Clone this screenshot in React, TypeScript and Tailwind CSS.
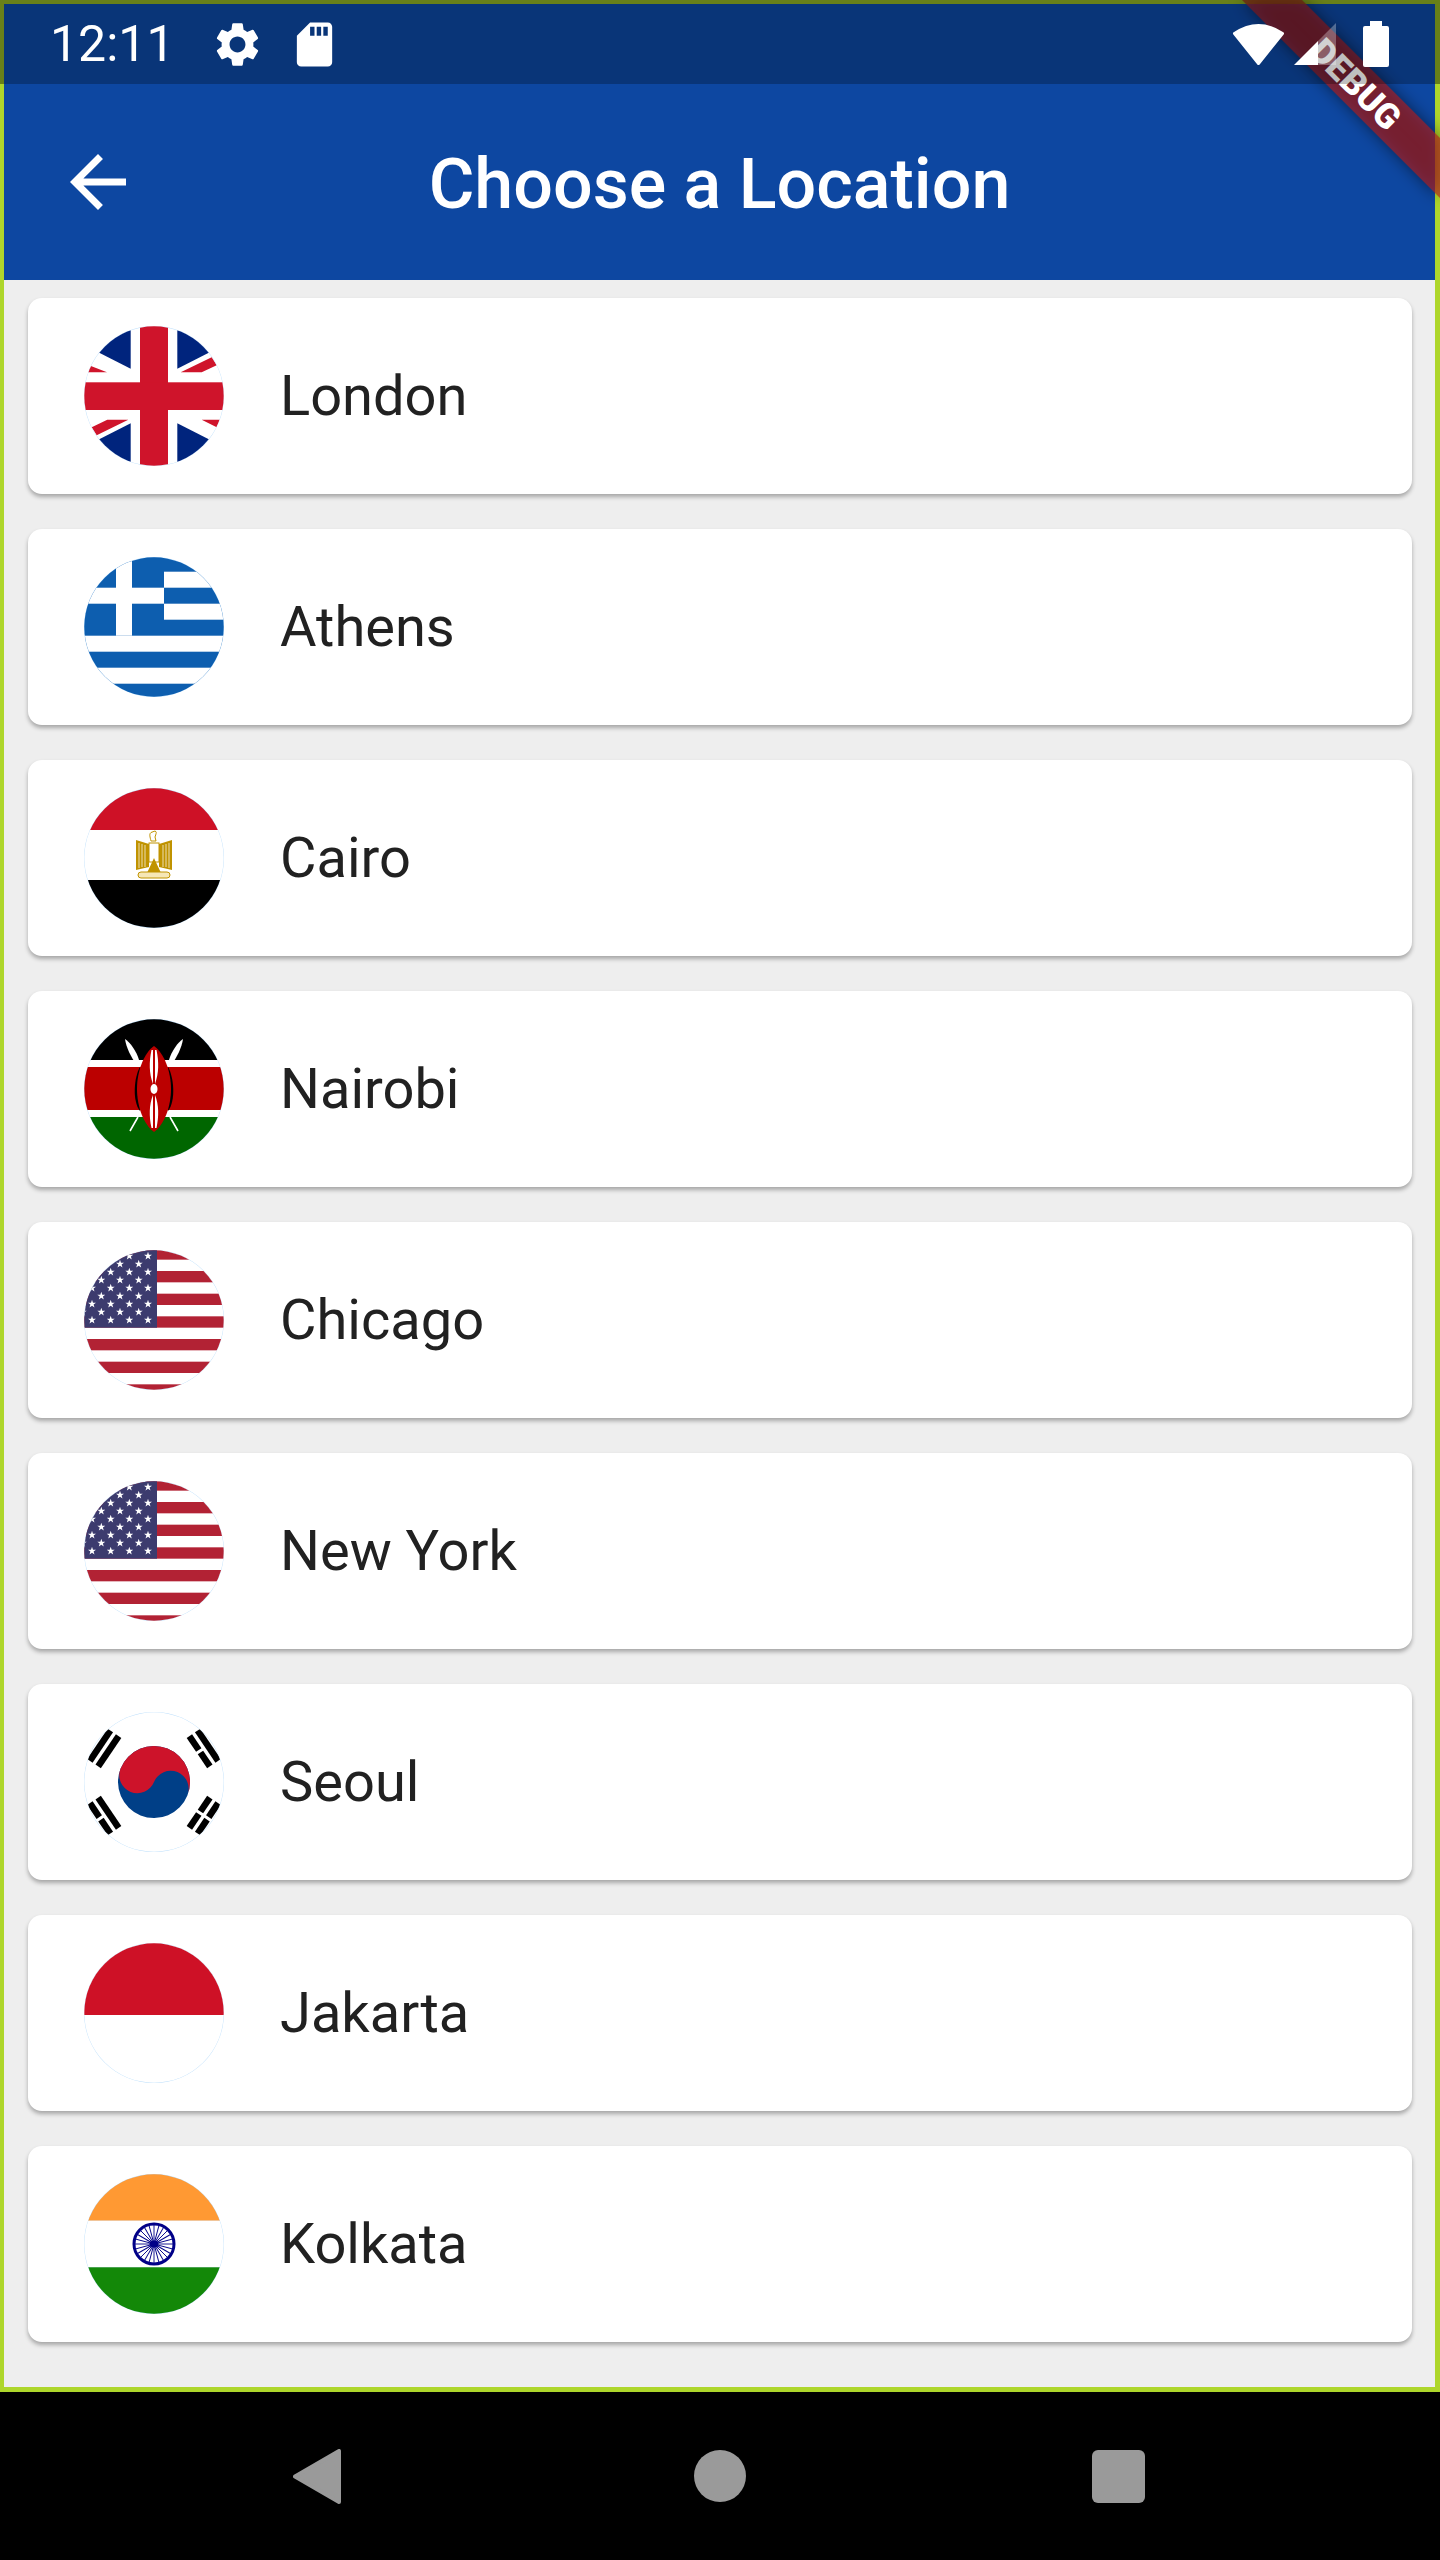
const cities = ["London", "Athens", "Cairo", "Nairobi", "Chicago", "New York", "Seoul", "Jakarta", "Kolkata"];

function star(cx: number, cy: number, r: number) {
  const pts: string[] = [];
  for (let i = 0; i < 10; i++) {
    const rad = i % 2 === 0 ? r : r * 0.4;
    const a = (Math.PI / 5) * i - Math.PI / 2;
    pts.push(`${cx + rad * Math.cos(a)},${cy + rad * Math.sin(a)}`);
  }
  return pts.join(" ");
}

function UK() {
  const navy = "#00247d";
  const red = "#cf142b";
  return (
    <>
      <rect width="140" height="140" fill="#fff" />
      <polygon points="46.7,42.7 46.7,0 -10,0 -10,14" fill={navy} />
      <polygon points="93.3,42.7 93.3,0 150,0 150,14" fill={navy} />
      <polygon points="46.7,97.3 46.7,140 -10,140 -10,126" fill={navy} />
      <polygon points="93.3,97.3 93.3,140 150,140 150,126" fill={navy} />
      <polygon points="4.3,39 23,46.3 2,46.3" fill={red} />
      <polygon points="127.7,31.3 132.7,39.3 117.7,46.3 96.7,46.3" fill={red} />
      <polygon points="7.7,101.3 12.7,109.3 44.3,93.7 23.3,93.7" fill={red} />
      <polygon points="117.7,93.7 136,93.7 132.7,101.3" fill={red} />
      <rect x="56" width="28" height="140" fill={red} />
      <rect y="56.3" width="140" height="27.7" fill={red} />
    </>
  );
}

function Greece() {
  const blue = "#0d5eaf";
  return (
    <>
      <rect width="140" height="140" fill={blue} />
      <rect x="80" y="14.7" width="60" height="16" fill="#fff" />
      <rect x="80" y="46.7" width="60" height="16" fill="#fff" />
      <rect y="78.7" width="140" height="16" fill="#fff" />
      <rect y="110.7" width="140" height="16" fill="#fff" />
      <rect x="32" width="16" height="78.7" fill="#fff" />
      <rect y="30.7" width="80" height="16" fill="#fff" />
    </>
  );
}

function Egypt() {
  const gold = "#c09300";
  return (
    <>
      <rect width="140" height="42" fill="#ce1126" />
      <rect y="42" width="140" height="50" fill="#fff" />
      <rect y="92" width="140" height="48" fill="#000" />
      <polygon points="52,52 65,56 65,79 52,82" fill={gold} />
      <polygon points="88,52 75,56 75,79 88,82" fill={gold} />
      <path d="M55 55v25M58 56v23M61 57v22M85 55v25M82 56v23M79 57v22" stroke="#fff" strokeWidth="0.7" />
      <rect x="65" y="55" width="10" height="19" fill="#fff" stroke={gold} strokeWidth="1" />
      <polygon points="70,70 77,85 63,85" fill={gold} />
      <path d="M67 53c-1-4-2-7 0-8.500l4-1.500c2 1 1 2 1 3l-1 3 1 4z" fill="#fff" stroke={gold} strokeWidth="1" />
      <rect x="54" y="84" width="32" height="6" rx="3" fill="#f6e7b6" stroke={gold} strokeWidth="1" />
    </>
  );
}

function Kenya() {
  return (
    <>
      <rect width="140" height="41" fill="#000" />
      <rect y="41" width="140" height="7" fill="#fff" />
      <rect y="48" width="140" height="43" fill="#bb0000" />
      <rect y="91" width="140" height="7" fill="#fff" />
      <rect y="98" width="140" height="42" fill="#006600" />
      <path d="M54 98 46 112M86 98 94 112" stroke="#fff" strokeWidth="1.600" />
      <path d="M41 20c5 3 12 13 14 21l-3 4c-5-7-10-17-11-25z" fill="#fff" />
      <path d="M99 20c-5 3-12 13-14 21l3 4c5-7 10-17 11-25z" fill="#fff" />
      <path d="M56 48C50 58 48 82 56 92L62 70z" fill="#000" />
      <path d="M84 48C90 58 92 82 84 92L78 70z" fill="#000" />
      <path d="M70 27C80 34 87 52 87 70S80 106 70 113C60 106 53 88 53 70S60 34 70 27z" fill="#bb0000" />
      <path d="M67.500 31C65 43 65 54 69 65V31zM72.500 31C75 43 75 54 71 65V31z" fill="#fff" />
      <path d="M67.500 109C65 97 65 86 69 76V109zM72.500 109C75 97 75 86 71 76V109z" fill="#fff" />
      <ellipse cx="70" cy="70" rx="3.500" ry="5" fill="#fff" />
    </>
  );
}

function USA() {
  const rows = [6, 14, 22, 30, 38, 46, 54, 62, 70];
  return (
    <>
      <rect width="140" height="140" fill="#fff" />
      {[-1.67, 21, 43.67, 66.33, 89, 111.67, 134.33].map((y) => (
        <rect key={y} y={y} width="140" height="11.33" fill="#b22234" />
      ))}
      <rect width="73" height="77.700" fill="#3c3b6e" />
      {rows.map((y, i) =>
        (i % 2 === 0 ? [8, 26.700, 45.300, 64] : [-1.300, 17.300, 36, 54.700]).map((x) => (
          <polygon key={`${x}-${y}`} points={star(x, y, 4.200)} fill="#fff" />
        )),
      )}
    </>
  );
}

function Trigram({ angle, bars }: { angle: number; bars: boolean[] }) {
  return (
    <g transform={`translate(70 70) rotate(${angle})`}>
      {bars.map((broken, i) => {
        const y = -55 - i * 10 - 3.250;
        return broken ? (
          <g key={i}>
            <rect x="-18.300" y={y} width="16.800" height="6.500" fill="#000" />
            <rect x="1.500" y={y} width="16.800" height="6.500" fill="#000" />
          </g>
        ) : (
          <rect key={i} x="-18.300" y={y} width="36.600" height="6.500" fill="#000" />
        );
      })}
    </g>
  );
}

function Korea() {
  return (
    <>
      <rect width="140" height="140" fill="#fff" />
      <g transform="translate(70 70) rotate(22)">
        <circle r="36" fill="#003f87" />
        <path d="M-36 0A36 36 0 0 1 36 0A18 18 0 0 0 0 0A18 18 0 0 1-36 0Z" fill="#cd132a" />
      </g>
      <Trigram angle={-56} bars={[false, false, false]} />
      <Trigram angle={56} bars={[true, false, true]} />
      <Trigram angle={-124} bars={[false, true, false]} />
      <Trigram angle={124} bars={[true, true, true]} />
    </>
  );
}

function Indonesia() {
  return (
    <>
      <rect width="140" height="140" fill="#fff" />
      <rect width="140" height="72" fill="#ce1126" />
    </>
  );
}

function India() {
  const navy = "#000088";
  return (
    <>
      <rect width="140" height="46.700" fill="#ff9933" />
      <rect y="46.700" width="140" height="46.600" fill="#fff" />
      <rect y="93.300" width="140" height="46.700" fill="#138808" />
      <circle cx="70" cy="70" r="20" fill="#fff" stroke={navy} strokeWidth="3" />
      {Array.from({ length: 24 }).map((_, i) => (
        <line key={i} x1="70" y1="70" x2="70" y2="51" stroke={navy} strokeWidth="0.900" transform={`rotate(${i * 15} 70 70)`} />
      ))}
      <ellipse cx="70" cy="70" rx="4.500" ry="3.500" fill={navy} />
    </>
  );
}

const flags = [UK, Greece, Egypt, Kenya, USA, USA, Korea, Indonesia, India];

function Flag({ index }: { index: number }) {
  const Art = flags[index];
  return (
    <svg viewBox="0 0 140 140" className="h-[140px] w-[140px] shrink-0">
      <defs>
        <clipPath id={`flag-${index}`}>
          <circle cx="70" cy="70" r="69.700" />
        </clipPath>
      </defs>
      <circle cx="70" cy="70" r="70" fill="#bbdefb" />
      <g clipPath={`url(#flag-${index})`}>
        <Art />
      </g>
    </svg>
  );
}

function DebugBanner() {
  return (
    <svg viewBox="0 0 240 280" className="absolute right-0 top-0 z-10 h-[280px] w-[240px]">
      <defs>
        <filter id="band-blur" x="-30%" y="-30%" width="160%" height="160%">
          <feGaussianBlur stdDeviation="8" />
        </filter>
      </defs>
      <polygon points="42,0 102,0 240,138 240,198" fill="#000" fillOpacity="0.5" filter="url(#band-blur)" />
      <polygon points="42,0 102,0 240,138 240,198" fill="#b71c1c" fillOpacity="0.63" />
      <text
        transform="translate(156 84) rotate(45)"
        y="12.500"
        textAnchor="middle"
        fontFamily="Roboto, sans-serif"
        fontWeight="900"
        fontSize="35"
        fill="#fff"
      >
        DEBUG
      </text>
    </svg>
  );
}

function StatusBar() {
  return (
    <div className="relative z-20 -ml-1 -mr-[5px] -mt-1 flex h-[84px] items-center justify-between border-l-4 border-r-[5px] border-t-4 border-black/20 bg-black/25 pl-[46px] pr-[46px] text-white">
      <div className="flex items-center">
        <span className="w-[121px] text-[50px] leading-none">12:11</span>
        <svg viewBox="0 0 24 24" fill="currentColor" className="ml-[40px] h-[53px] w-[53px]">
          <path d="M19.140 12.940c.04-.3.060-.61.060-.94 0-.32-.02-.64-.07-.94l2.030-1.580c.18-.14.23-.41.120-.61l-1.920-3.320c-.12-.22-.37-.29-.59-.22l-2.390.96c-.5-.38-1.030-.7-1.620-.94l-.36-2.540c-.04-.24-.24-.41-.48-.41h-3.840c-.24 0-.43.17-.47.41l-.36 2.540c-.59.24-1.130.57-1.620.94l-2.390-.96c-.22-.08-.47 0-.59.22L2.740 8.870c-.12.21-.08.47.12.61l2.030 1.580c-.05.3-.09.63-.09.94s.02.64.07.94l-2.030 1.580c-.18.14-.23.41-.12.61l1.920 3.320c.12.22.37.29.59.22l2.390-.96c.5.38 1.030.7 1.620.94l.36 2.540c.05.24.24.41.48.41h3.840c.24 0 .44-.17.47-.41l.36-2.540c.59-.24 1.130-.56 1.620-.94l2.390.96c.22.08.47 0 .59-.22l1.920-3.320c.12-.22.07-.47-.12-.61l-2.010-1.580zM12 15.600c-1.980 0-3.600-1.620-3.600-3.600s1.620-3.600 3.600-3.600 3.600 1.620 3.600 3.600-1.620 3.600-3.600 3.600z" />
        </svg>
        <svg viewBox="0 0 24 24" fill="currentColor" className="ml-[24px] h-[53px] w-[53px]">
          <path d="M18 2h-8L4.020 8 4 20c0 1.100.9 2 2 2h12c1.100 0 2-.9 2-2V4c0-1.100-.9-2-2-2zm-6 6h-2V4h2v4zm3 0h-2V4h2v4zm3 0h-2V4h2v4z" />
        </svg>
      </div>
      <div className="flex items-center">
        <svg viewBox="0 0 53 42" className="h-[42px] w-[53px]">
          <path d="M2.500 10.500Q26.500-5.500 50.500 10.500L26.500 40.500Z" fill="#fff" stroke="#fff" strokeWidth="3" strokeLinejoin="round" />
        </svg>
        <svg viewBox="0 0 42 42" className="ml-[9px] h-[42px] w-[42px]">
          <polygon points="24,18 24,42 0,42" fill="#fff" />
          <polygon points="24,18 42,0 42,42 24,42" fill="#fff" fillOpacity="0.3" />
        </svg>
        <svg viewBox="0 0 26 46" className="ml-[27px] h-[46px] w-[26px]">
          <path d="M7 0h12v5h5a2 2 0 0 1 2 2v37a2 2 0 0 1-2 2H2a2 2 0 0 1-2-2V7a2 2 0 0 1 2-2h5z" fill="#fff" />
        </svg>
      </div>
    </div>
  );
}

function AppBar() {
  return (
    <div className="bg-[#0d47a1]">
      <StatusBar />
      <div className="grid h-[196px] grid-cols-[1fr_auto_1fr] items-center text-white">
        <svg viewBox="0 0 24 24" fill="currentColor" className="ml-[52px] h-[84px] w-[84px]">
          <path d="M20 11H7.830l5.590-5.590L12 4l-8 8 8 8 1.410-1.410L7.830 13H20v-2z" />
        </svg>
        <h1 className="pt-[3px] text-[70px] font-medium leading-none">Choose a Location</h1>
        <div />
      </div>
    </div>
  );
}

function LocationCard({ city, index }: { city: string; index: number }) {
  return (
    <div className="flex h-[196px] items-center gap-[56px] rounded-[14px] bg-white pl-[56px] shadow-[0_3px_4px_rgba(0,0,0,0.3)]">
      <Flag index={index} />
      <span className="text-[56px] leading-none text-[#212121]">{city}</span>
    </div>
  );
}

function NavBar() {
  return (
    <div className="flex flex-1 items-center justify-center bg-black pr-[3px]">
      <svg viewBox="0 0 49 55" className="h-[55px] w-[49px]">
        <path d="M2 27.500 46 2v51z" fill="#9a9a9a" stroke="#9a9a9a" strokeWidth="4" strokeLinejoin="round" />
      </svg>
      <div className="ml-[352px] h-[52px] w-[52px] rounded-full bg-[#9a9a9a]" />
      <div className="ml-[346px] h-[53px] w-[53px] rounded-[6px] bg-[#9a9a9a]" />
    </div>
  );
}

export default function App() {
  return (
    <div className="relative flex h-[2560px] w-[1440px] flex-col bg-black font-[Roboto,sans-serif]">
      <div className="flex h-[2392px] flex-col border-4 border-b-[5px] border-r-[5px] border-[#aed62b] bg-[#eeeeee]">
        <AppBar />
        <div className="flex flex-col gap-[35px] pl-[24px] pr-[23px] pt-[18px]">
          {cities.map((city, i) => (
            <LocationCard key={city} city={city} index={i} />
          ))}
        </div>
      </div>
      <DebugBanner />
      <NavBar />
    </div>
  );
}
